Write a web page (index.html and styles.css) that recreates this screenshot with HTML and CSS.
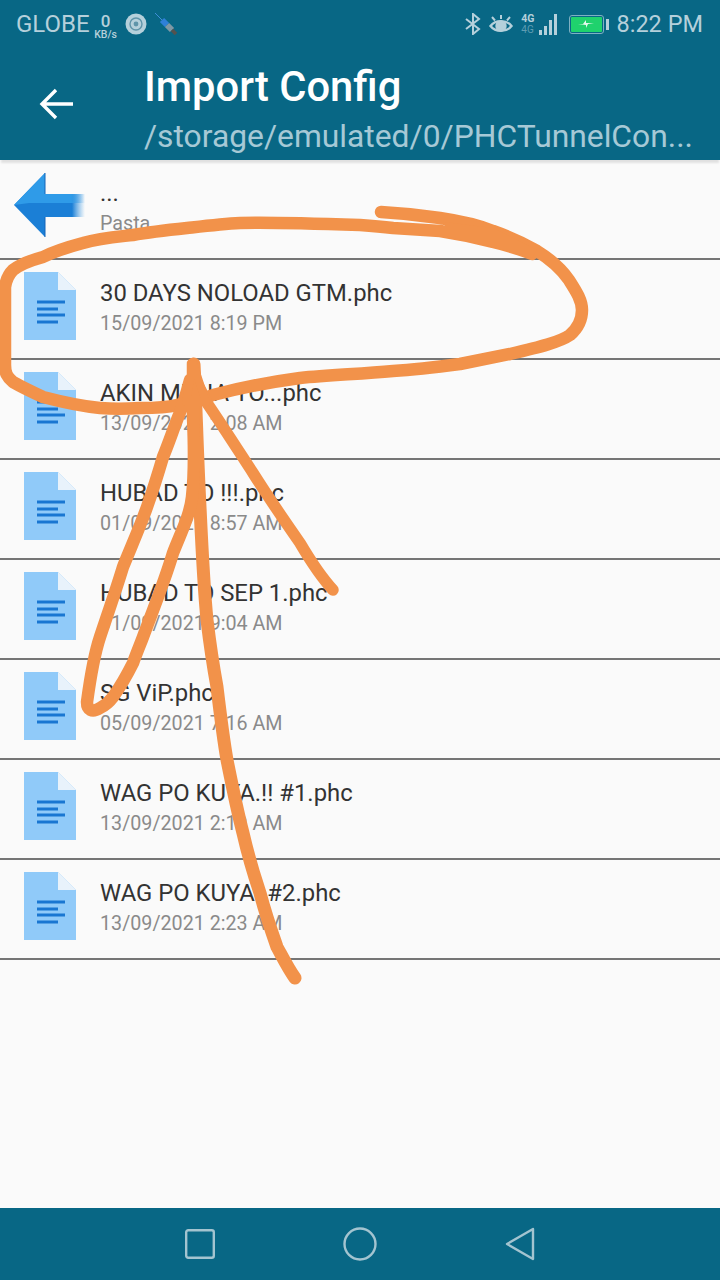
FILE: index.html

```html
<!DOCTYPE html>
<html lang="en">
<head>
    <meta charset="UTF-8">
    <meta name="viewport" content="width=device-width, initial-scale=1.0">
    <title>Import Config</title>
    <link rel="stylesheet" href="styles.css">
</head>
<body>
<div class="screen">
    <!-- status bar -->
    <div class="status-bar">
        <div class="status-left">
            <span class="carrier">GLOBE</span>
            <span class="speed"><b>0</b><i>KB/s</i></span>
            <svg class="ic-disc" width="22" height="22" viewBox="0 0 22 22"><circle cx="11" cy="11" r="10.5" fill="#b5d0db"/><circle cx="11" cy="11" r="6" fill="none" stroke="#5f94a9" stroke-width="1.4"/><circle cx="11" cy="11" r="2.4" fill="#5f94a9"/></svg>
            <svg class="ic-syringe" width="24" height="24" viewBox="0 0 24 24" fill="none"><path d="M1 1l7 7" stroke="#3f8fd8" stroke-width="1"/><path d="M8 8l5 5" stroke="#2f80d8" stroke-width="6"/><path d="M13 13l5 5" stroke="#7f98a5" stroke-width="6"/><path d="M18 18l4 4" stroke="#54524e" stroke-width="3.5"/></svg>
        </div>
        <div class="status-right">
            <svg class="ic-bt" width="16" height="22" viewBox="0 0 16 22" fill="none" stroke="#b5d0db" stroke-width="2"><path d="M1 6l13 10-6 5V1l6 5L1 16"/></svg>
            <svg class="ic-eye" width="24" height="19" viewBox="0 0 24 19" fill="none" stroke="#b5d0db" stroke-width="2.4"><path d="M1.500 11c5-6.500 16-6.500 21 0-5 6.500-16 6.500-21 0z"/><circle cx="12" cy="11" r="4.500" fill="#b5d0db"/><path d="M3 2l3 3.500M21 2l-3 3.500M12 0v4" stroke-width="2"/></svg>
            <span class="net">
                <span class="net-label"><b>4G</b><i>4G</i></span>
                <span class="bars"><u class="b1"></u><u class="b2"></u><u class="b3"></u><u class="b4"></u></span>
            </span>
            <span class="battery"><span class="battery-body"><svg width="16" height="8" viewBox="0 0 16 8"><path d="M0 4h5l3-4v3h8l-6 1-2 4V5z" fill="#e4f8ec"/></svg></span><span class="battery-tip"></span></span>
            <span class="clock">8:22 PM</span>
        </div>
    </div>

    <!-- toolbar -->
    <header class="toolbar">
        <svg class="back" width="36" height="32" viewBox="0 0 36 32" fill="none" stroke="#fff" stroke-width="3.400"><path d="M34 16H4M17 2L3 16l14 14"/></svg>
        <div class="toolbar-text">
            <h1>Import Config</h1>
            <p>/storage/emulated/0/PHCTunnelCon...</p>
        </div>
    </header>

    <div class="file-list">
        <div class="row">
            <svg class="row-icon" width="72" height="68" viewBox="0 0 72 68">
                <defs><linearGradient id="tail" gradientUnits="userSpaceOnUse" x1="0" x2="72" y1="0" y2="0"><stop offset="0.82" stop-color="#1b7fd6"/><stop offset="1" stop-color="#4da3e6" stop-opacity="0"/></linearGradient>
                <linearGradient id="glow" gradientUnits="userSpaceOnUse" x1="0" x2="72" y1="0" y2="0"><stop offset="0.8" stop-color="#2f9be8"/><stop offset="1" stop-color="#4da3e6" stop-opacity="0"/></linearGradient></defs>
                <path d="M1 33L32 1V22H72V45H32V65z" fill="url(#tail)"/>
                <path d="M1 33L32 1V22H72V31H16z" fill="url(#glow)"/>
                <path d="M32 1V22M32 45V65" stroke="#1565b8" stroke-width="1"/>
            </svg>
            <div class="row-text">
                <div class="name">...</div>
                <div class="sub">Pasta</div>
            </div>
        </div>
        <div class="row">
            <svg class="row-icon" width="52" height="68" viewBox="0 0 52 68"><use href="#doc"/></svg>
            <div class="row-text"><div class="name">30 DAYS NOLOAD GTM.phc</div><div class="sub">15/09/2021 8:19 PM</div></div>
        </div>
        <div class="row">
            <svg class="row-icon" width="52" height="68" viewBox="0 0 52 68"><use href="#doc"/></svg>
            <div class="row-text"><div class="name">AKIN MUNA TO...phc</div><div class="sub">13/09/2021 2:08 AM</div></div>
        </div>
        <div class="row">
            <svg class="row-icon" width="52" height="68" viewBox="0 0 52 68"><use href="#doc"/></svg>
            <div class="row-text"><div class="name">HUBAD TO !!!.phc</div><div class="sub">01/09/2021 8:57 AM</div></div>
        </div>
        <div class="row">
            <svg class="row-icon" width="52" height="68" viewBox="0 0 52 68"><use href="#doc"/></svg>
            <div class="row-text"><div class="name">HUBAD TO SEP 1.phc</div><div class="sub">01/09/2021 9:04 AM</div></div>
        </div>
        <div class="row">
            <svg class="row-icon" width="52" height="68" viewBox="0 0 52 68"><use href="#doc"/></svg>
            <div class="row-text"><div class="name">SG ViP.phc</div><div class="sub">05/09/2021 7:16 AM</div></div>
        </div>
        <div class="row">
            <svg class="row-icon" width="52" height="68" viewBox="0 0 52 68"><use href="#doc"/></svg>
            <div class="row-text"><div class="name">WAG PO KUYA.!! #1.phc</div><div class="sub">13/09/2021 2:19 AM</div></div>
        </div>
        <div class="row">
            <svg class="row-icon" width="52" height="68" viewBox="0 0 52 68"><use href="#doc"/></svg>
            <div class="row-text"><div class="name">WAG PO KUYA..#2.phc</div><div class="sub">13/09/2021 2:23 AM</div></div>
        </div>
    </div>

    <!-- nav bar -->
    <nav class="nav-bar">
        <svg width="30" height="30" viewBox="0 0 30 30" fill="none" stroke="#a3c4d0" stroke-width="2.400"><rect x="1.200" y="1.200" width="27.600" height="27.600" rx="2"/></svg>
        <svg width="34" height="34" viewBox="0 0 34 34" fill="none" stroke="#a3c4d0" stroke-width="2.400"><circle cx="17" cy="17" r="15.500"/></svg>
        <svg width="30" height="34" viewBox="0 0 30 34" fill="none" stroke="#a3c4d0" stroke-width="2.400" stroke-linejoin="round"><path d="M28 2L2 17l26 15z"/></svg>
    </nav>

    <!-- hand drawn marks on top of the screenshot -->
    <svg class="scribble" width="720" height="1280" viewBox="0 0 720 1280" fill="none" stroke="#f2924a" stroke-linecap="round" stroke-linejoin="round">
        <!-- big circle round the second row -->
        <path stroke-width="12.500" d="M381 212C400 213 420 215 440 218C460 221 478 225 493 231C510 237 525 244 537 251C550 259 562 270 569 280C576 291 582 300 582 310C582 320 578 328 570 335C560 342 540 347 510 354C490 358 475 361 460 364C430 368 410 370 393 371C360 374 330 375 300 378C270 382 240 388 213 395C200 400 190 403 177 405C165 408 150 408 140 408C125 409 112 409 100 408C80 406 62 402 43 397C30 391 20 386 13 382C7 377 5 373 5 365L5 287C6 280 8 275 13 270C22 263 32 260 43 257C55 251 68 247 83 243C100 238 115 237 133 235C150 232 168 230 187 228C205 226 222 224 240 223C270 222 300 223 360 225C375 226 385 227 393 228C410 229 425 230 440 231C460 234 478 238 493 242C510 246 522 250 532 254"/>
        <!-- the two passes run together on the right -->
        <path stroke="none" fill="#f2924a" d="M445 222L493 228L537 250L532 258L493 247L445 236z"/>
        <!-- arrow: long line -->
        <path stroke-width="13" d="M194 364C196 400 197 450 200 507C202 550 204 590 207 620C210 645 213 665 217 687C220 712 223 737 227 760C232 785 237 810 243 833C248 855 254 875 260 893C265 912 271 930 277 947C283 958 289 970 295 978"/>
        <!-- arrow: loop on the left -->
        <path stroke-width="12.500" d="M190 380C186 395 182 408 177 420C172 433 168 445 163 457C158 474 153 490 147 507C140 527 131 547 123 567C116 590 108 613 100 637C94 655 90 680 87 702C87 710 92 713 100 708C108 704 110 701 113 697C120 687 127 675 133 663C137 652 140 645 143 637C153 610 165 580 173 553C182 530 190 515 192 497C195 470 194 440 193 417C193 400 193 380 193 364"/>
        <!-- arrow: right branch -->
        <path stroke-width="11.500" d="M198 385C202 392 204 397 207 403C222 425 238 450 253 473C268 497 284 520 300 543C310 560 322 578 333 590"/>
        <!-- where the strokes meet -->
        <path stroke-width="8" fill="#f2924a" d="M193 363L186 402L206 402z"/>
    </svg>

    <svg class="defs" width="0" height="0">
        <symbol id="doc" viewBox="0 0 52 68">
            <path d="M0 0h34l18 18v50H0z" fill="#90caf9"/>
            <path d="M34 0l18 18H34z" fill="#e8f2fb"/>
            <path d="M13 30h28M13 37h21M13 43h28M13 50h21" stroke="#1976d2" stroke-width="3"/>
        </symbol>
    </svg>
</div>
</body>
</html>
```

FILE: styles.css

```css
* {
    box-sizing: border-box;
}

body {
    margin: 0;
    font-family: 'Roboto', sans-serif;
    background-color: #fafafa;
}

.screen {
    position: relative;
    width: 720px;
    height: 1280px;
    overflow: hidden;
    display: flex;
    flex-direction: column;
}

/* status bar */
.status-bar {
    height: 52px;
    background-color: #086785;
    color: #b5d0db;
    display: flex;
    justify-content: space-between;
    align-items: center;
    padding: 0 17px 4px 16px;
}

.status-left,
.status-right {
    display: flex;
    align-items: center;
}

.carrier {
    font-size: 24px;
}

.speed {
    width: 24px;
    display: flex;
    flex-direction: column;
    align-items: center;
    margin: 4px 7px 0 4px;
    line-height: 1;
}

.speed b {
    font-size: 17px;
    font-weight: 500;
    line-height: 17px;
}

.speed i {
    font-style: normal;
    font-size: 10.5px;
    font-weight: 500;
    line-height: 10px;
    white-space: nowrap;
}

.ic-syringe {
    margin-left: 7px;
}

.ic-bt,
.ic-eye {
    margin-right: 8px;
}

.net {
    display: flex;
    align-items: flex-end;
    margin-right: 12px;
}

.net-label {
    display: flex;
    flex-direction: column;
    line-height: 1;
}

.net-label b {
    font-size: 10.5px;
    line-height: 12px;
    font-weight: 700;
}

.net-label i {
    font-style: normal;
    font-size: 10px;
    line-height: 10px;
    color: #5f9db3;
}

.bars {
    display: flex;
    align-items: flex-end;
    gap: 2px;
    margin-left: 4px;
}

.bars u {
    display: block;
    width: 3px;
    background-color: #b5d0db;
}

.b1 { height: 5px; }
.b2 { height: 9px; }
.b3 { height: 15px; }
.b4 { height: 21px; }

.battery {
    display: flex;
    align-items: center;
    margin-right: 8px;
}

.battery-body {
    width: 35px;
    height: 19px;
    border: 1px solid #7fb0c2;
    border-radius: 3px;
    background-color: #1fd26d;
    background-clip: content-box;
    padding: 1px;
    display: flex;
    align-items: center;
    justify-content: center;
}

.battery-tip {
    width: 3px;
    height: 11px;
    margin-left: 2px;
    background-color: #b5d0db;
}

.clock {
    font-size: 23.5px;
}

/* toolbar */
.toolbar {
    height: 108px;
    background-color: #086785;
    display: flex;
    padding-left: 39px;
    box-shadow: 0 4px 2px -1px rgba(0, 0, 0, 0.1);
    position: relative;
}

.back {
    margin-top: 36px;
}

.toolbar-text {
    margin-left: 69px;
    min-width: 0;
}

.toolbar-text h1 {
    margin: 12px 0 0;
    font-size: 41.7px;
    line-height: 46px;
    font-weight: 500;
    color: #fff;
}

.toolbar-text p {
    margin: 8px 0 0;
    font-size: 31.8px;
    line-height: 36px;
    color: #a6c9d6;
    white-space: nowrap;
}

/* file rows */
.file-list {
    flex: 1;
}

.row {
    height: 100px;
    border-bottom: 2px solid #757575;
    display: flex;
    align-items: flex-start;
    padding: 12px 0 0 24px;
}

.row-icon {
    flex: none;
}

.row-text {
    margin-left: 24px;
    padding-top: 6px;
}

.row:first-child {
    padding-left: 13px;
}

.row:first-child .row-text {
    margin-left: 15px;
}

.name {
    font-size: 23.85px;
    line-height: 30px;
    color: #333;
}

.sub {
    font-size: 19.7px;
    line-height: 30px;
    margin-top: 1px;
    color: #8a8a8a;
}

/* nav bar */
.nav-bar {
    height: 72px;
    background-color: #086785;
    display: flex;
    align-items: center;
    justify-content: center;
    gap: 128px;
}

/* over everything else */
.scribble {
    position: absolute;
    left: 0;
    top: 0;
}

.defs {
    position: absolute;
}
```
